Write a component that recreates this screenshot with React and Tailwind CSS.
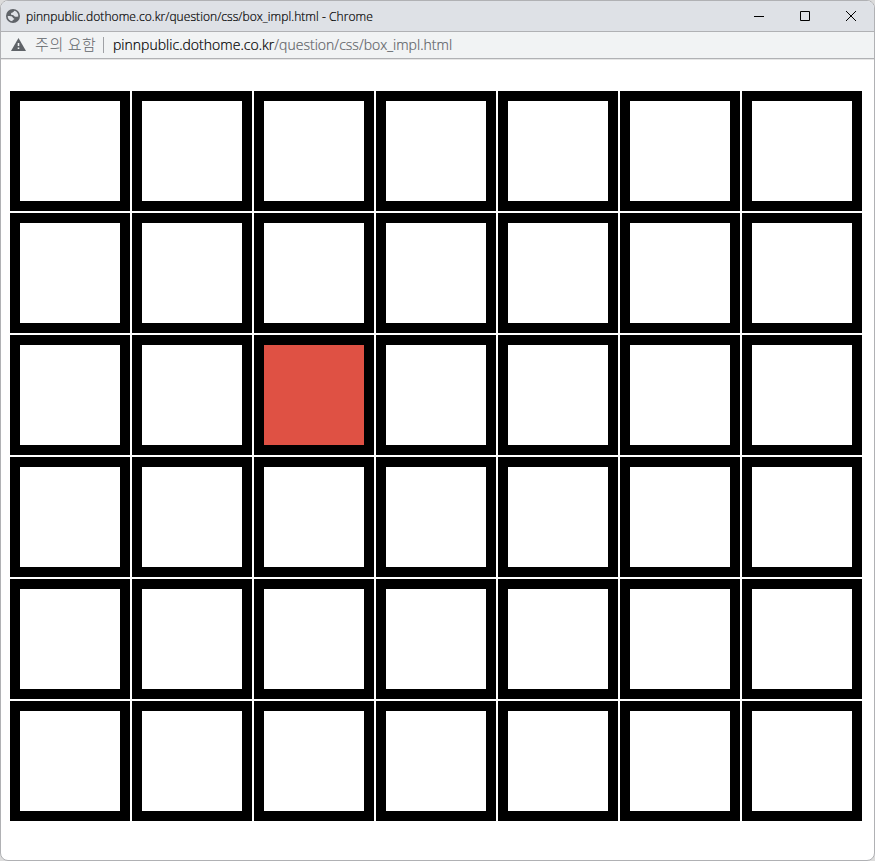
const CELLS = Array.from({ length: 42 }, (_, i) => i);
const HIGHLIGHTED = 16;

function GlobeIcon() {
  return (
    <svg className="mb-px block h-[14px] w-[14px] shrink-0" viewBox="0 0 14 14">
      <circle cx="7" cy="7" r="7" fill="#5f6368" />
      <path
        d="M8.6 1.8C7.4 2.2 7.9 3.2 6.6 3.5C5.2 3.9 4.7 4.6 5.1 5.5C5.6 6.4 7.3 5.9 8 6.8C8.6 7.7 9.5 8.2 12.3 7.4C12.5 4.9 11.1 2.6 8.6 1.8Z"
        fill="#dee1e6"
      />
      <path
        d="M1.7 6.9C3.4 6.9 5.3 6.8 6.2 7.7C6.9 8.4 7 9.2 8 9.4C8.7 9.8 8.1 10.5 7.4 10.7C6.4 11 6.7 11.6 6.2 12.2C3.5 11.8 1.6 9.6 1.7 6.9Z"
        fill="#dee1e6"
      />
    </svg>
  );
}

function WarningIcon() {
  return (
    <svg className="-mt-px block h-[13px] w-[15px] shrink-0" viewBox="0 0 15 13">
      <path d="M7.5 0L15 13H0Z" fill="#5f6368" />
      <path d="M6.7 5h1.6v3H6.7zM6.7 9.5h1.6V11H6.7z" fill="#f1f3f4" />
    </svg>
  );
}

function TitleBar() {
  return (
    <header className="flex h-[31px] items-center border-b border-[#b0b1b4] bg-[#dee1e6] pl-[5px]">
      <GlobeIcon />
      <h1 className="ml-[6px] whitespace-nowrap pt-px text-[12px] font-light leading-4 tracking-[0.06px] text-black [-webkit-text-stroke:0.2px]">
        pinnpublic.dothome.co.kr/question/css/box_impl.html - Chrome
      </h1>
      <div className="ml-auto flex">
        <button aria-label="Minimize" className="grid h-[30px] w-[46px] place-items-center">
          <svg className="block h-[11px] w-[10px]" viewBox="0 0 10 11">
            <path d="M0 5.5h10" stroke="#000" />
          </svg>
        </button>
        <button aria-label="Maximize" className="grid h-[30px] w-[46px] place-items-center">
          <svg className="block h-[10px] w-[10px]" viewBox="0 0 10 10">
            <path d="M.5.5h9v9h-9z" stroke="#000" fill="none" />
          </svg>
        </button>
        <button aria-label="Close" className="grid h-[30px] w-[46px] place-items-center">
          <svg className="block h-[10px] w-[10px]" viewBox="0 0 10 10">
            <path d="M0 0l10 10M10 0L0 10" stroke="#000" strokeWidth="1" />
          </svg>
        </button>
      </div>
    </header>
  );
}

function AddressBar() {
  return (
    <div className="flex h-[27px] items-center border-b border-[#b0b1b4] bg-[#f1f3f4] pl-[10px] text-[14px] leading-5">
      <WarningIcon />
      <span className="-mt-[3px] ml-[9px] w-[61px] shrink-0 whitespace-nowrap font-['Noto_Sans_CJK_KR',sans-serif] text-[15px] font-light tracking-[0.6px] text-[#5f6368]">
        주의 요함
      </span>
      <span className="ml-[7px] h-4 w-px bg-[#9fa1a5]" />
      <p className="ml-[9px] whitespace-nowrap font-light tracking-[0.02px] text-black [-webkit-text-stroke:0.2px]">
        pinnpublic.dothome.co.kr
        <span className="text-[#5f6368]">/question/css/box_impl.html</span>
      </p>
    </div>
  );
}

export default function App() {
  return (
    <div className="h-[861px] w-[875px] bg-[#dcdcdc] font-['Open_Sans','Noto_Sans_CJK_KR',sans-serif]">
      <div className="h-full overflow-hidden rounded-[8px] border border-[#b0b1b4] bg-white">
        <TitleBar />
        <AddressBar />
        <main className="border-t border-[#e6e6e6] pl-[9px] pt-[31px]">
          <div className="grid w-[852px] grid-cols-7 gap-[2px]">
            {CELLS.map((i) => (
              <div
                key={i}
                className={
                  i === HIGHLIGHTED
                    ? "h-[120px] border-[10px] border-black bg-[#df5144]"
                    : "h-[120px] border-[10px] border-black bg-white"
                }
              />
            ))}
          </div>
        </main>
      </div>
    </div>
  );
}
